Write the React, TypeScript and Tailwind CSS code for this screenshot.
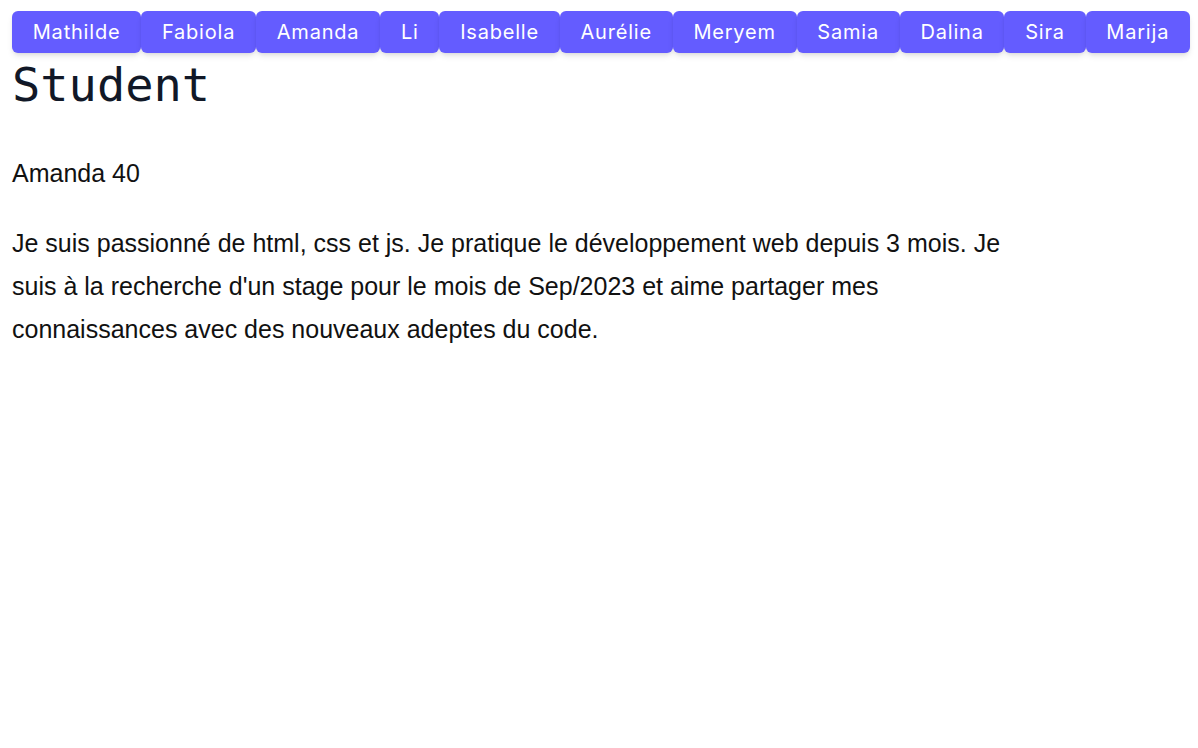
const students = [
  'Mathilde',
  'Fabiola',
  'Amanda',
  'Li',
  'Isabelle',
  'Aurélie',
  'Meryem',
  'Samia',
  'Dalina',
  'Sira',
  'Marija',
];

export default function App() {
  return (
    <main className="min-h-screen bg-white pl-3 pr-2 pt-[11px] text-[#111827]">
      {/* Student nav */}
      <nav className="flex w-full">
        {students.map((name) => (
          <button
            key={name}
            className="h-[42px] flex-auto rounded-md bg-[#645cff] px-4 font-['Inter',sans-serif] text-[20px] tracking-[0.04em] text-white shadow-md"
          >
            {name}
          </button>
        ))}
      </nav>

      <h1 className="font-['DejaVu_Sans_Mono',monospace] text-[47px] leading-[64px] text-[#111827]">
        Student
      </h1>

      <div className="font-['Liberation_Sans',Arial,sans-serif] text-[25px] leading-[43px] text-[#111111]">
        <p className="mt-[35px]">Amanda 40</p>
        <p className="mt-[27px] max-w-[1024px]">
          Je suis passionné de html, css et js. Je pratique le développement web depuis 3 mois. Je
          suis à la recherche d'un stage pour le mois de Sep/2023 et aime partager mes
          connaissances avec des nouveaux adeptes du code.
        </p>
      </div>
    </main>
  );
}
